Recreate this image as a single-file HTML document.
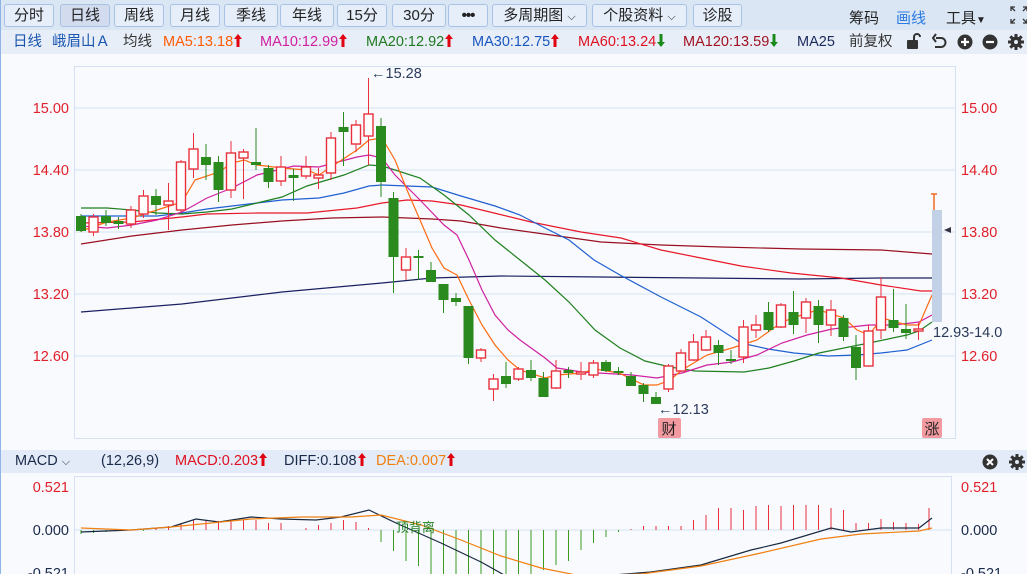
<!DOCTYPE html>
<html><head><meta charset="utf-8">
<style>
*{margin:0;padding:0;box-sizing:border-box}
body{width:1027px;height:574px;overflow:hidden;background:#f8fafe;font-family:"Liberation Sans","Noto Sans CJK SC",sans-serif;position:relative;border-left:1px solid #8fb4e8}
.tb{position:absolute;left:0;top:0;width:1027px;height:30px;background:#dbe6f5}
.btn{position:absolute;top:4px;height:23px;border:1px solid #a8c2e6;border-radius:3px;background:#e6eefa;font-size:15px;color:#222;text-align:center;line-height:21px}
.row2{position:absolute;left:0;top:30px;width:1027px;height:24px;background:#e8eef8;font-size:14.5px;line-height:24px;white-space:nowrap}
.row2 span{position:absolute;top:0}
.t{position:absolute;font-size:14.5px;white-space:nowrap}
.mh{position:absolute;left:0;top:450px;width:1027px;height:23px;background:#e2ebf7;font-size:14.5px;line-height:23px;white-space:nowrap}
.mh span{position:absolute;top:0}
svg.a{display:inline-block;vertical-align:-1px;margin-left:1px}
</style></head><body>
<div class="tb">
<div class="btn" style="left:3px;width:50px">分时</div>
<div class="btn" style="left:59px;width:50px;background:#d3dbef">日线</div>
<div class="btn" style="left:113px;width:50px">周线</div>
<div class="btn" style="left:169px;width:50px">月线</div>
<div class="btn" style="left:223px;width:54px">季线</div>
<div class="btn" style="left:279px;width:54px">年线</div>
<div class="btn" style="left:336px;width:50px">15分</div>
<div class="btn" style="left:391px;width:54px">30分</div>
<div class="btn" style="left:447px;width:40px;font-weight:bold;letter-spacing:-1px">•••</div>
<div class="btn" style="left:491px;width:95px">多周期图 <span style="font-size:11px">⌵</span></div>
<div class="btn" style="left:591px;width:95px">个股资料 <span style="font-size:11px">⌵</span></div>
<div class="btn" style="left:692px;width:49px">诊股</div>
<div class="t" style="left:848px;top:7px;font-size:15px;color:#222">筹码</div>
<div class="t" style="left:895px;top:7px;font-size:15px;color:#2b7be0">画线</div>
<div class="t" style="left:945px;top:7px;font-size:15px;color:#222">工具<span style="font-size:10px">▼</span></div>
<svg style="position:absolute;left:1009px;top:6px" width="18" height="18" viewBox="0 0 18 18" fill="none" stroke="#333" stroke-width="1.3"><path d="M1 5V1h4M1 1l4 4M13 1h4v4M17 1l-4 4M1 13v4h4M1 17l4-4M17 13v4h-4M17 17l-4-4"/></svg>
</div>
<div class="row2">
<span style="left:12px;color:#1a56b0">日线</span>
<span style="left:51px;color:#1a56b0">峨眉山Ａ</span>
<span style="left:122px;color:#333">均线</span>
<span style="left:162px;color:#ff5a00">MA5:13.18<svg class="a" width="8" height="13" viewBox="0 0 8 13"><path d="M4 0L8 5H5.5V13H2.5V5H0Z" fill="#e00010"/></svg></span>
<span style="left:259px;color:#d020a0">MA10:12.99<svg class="a" width="8" height="13" viewBox="0 0 8 13"><path d="M4 0L8 5H5.5V13H2.5V5H0Z" fill="#e00010"/></svg></span>
<span style="left:365px;color:#1f7a1f">MA20:12.92<svg class="a" width="8" height="13" viewBox="0 0 8 13"><path d="M4 0L8 5H5.5V13H2.5V5H0Z" fill="#e00010"/></svg></span>
<span style="left:471px;color:#1a56c0">MA30:12.75<svg class="a" width="8" height="13" viewBox="0 0 8 13"><path d="M4 0L8 5H5.5V13H2.5V5H0Z" fill="#e00010"/></svg></span>
<span style="left:577px;color:#e01020">MA60:13.24<svg class="a" width="8" height="13" viewBox="0 0 8 13"><path d="M4 13L8 8H5.5V0H2.5V8H0Z" fill="#1a8a1a"/></svg></span>
<span style="left:682px;color:#a01020">MA120:13.59<svg class="a" width="8" height="13" viewBox="0 0 8 13"><path d="M4 13L8 8H5.5V0H2.5V8H0Z" fill="#1a8a1a"/></svg></span>
<span style="left:796px;color:#1a2a5a">MA25</span>
<span style="left:848px;color:#333">前复权</span>
</div>
<svg style="position:absolute;left:904px;top:32px" width="123" height="20" viewBox="0 0 123 20">
<rect x="2" y="8" width="11" height="9" rx="1" fill="#333"/><path d="M9 8V5a3 3 0 0 1 6 0" stroke="#333" stroke-width="2" fill="none"/>
<path d="M31 6h5a4.5 4.5 0 0 1 0 9h-6M31 2l-3 4 3 4" stroke="#333" stroke-width="2" fill="none"/>
<circle cx="60" cy="10" r="7.5" fill="#333"/><path d="M56 10h8M60 6v8" stroke="#fff" stroke-width="2.2"/>
<circle cx="85" cy="10" r="7.5" fill="#333"/><path d="M81 10h8" stroke="#fff" stroke-width="2.2"/>
<g transform="translate(111,10)"><circle r="5.5" fill="#333"/><g stroke="#333" stroke-width="3"><path d="M0 -8V8M-8 0H8M-5.7 -5.7L5.7 5.7M5.7 -5.7L-5.7 5.7"/></g><circle r="2" fill="#e8eef8"/></g>
</svg>

<svg id="ch" style="position:absolute;left:0;top:54px" width="1027" height="520" viewBox="0 54 1027 520"></svg>

<div class="mh">
<span style="left:14px;color:#1a2a4a">MACD <span style="font-size:11px;position:static">⌵</span></span>
<span style="left:100px;color:#1a2a4a">(12,26,9)</span>
<span style="left:174px;color:#e01020">MACD:0.203<svg class="a" width="8" height="13" viewBox="0 0 8 13"><path d="M4 0L8 5H5.5V13H2.5V5H0Z" fill="#e00010"/></svg></span>
<span style="left:283px;color:#1a2a4a">DIFF:0.108<svg class="a" width="8" height="13" viewBox="0 0 8 13"><path d="M4 0L8 5H5.5V13H2.5V5H0Z" fill="#e00010"/></svg></span>
<span style="left:375px;color:#f08010">DEA:0.007<svg class="a" width="8" height="13" viewBox="0 0 8 13"><path d="M4 0L8 5H5.5V13H2.5V5H0Z" fill="#e00010"/></svg></span>
</div>
<svg style="position:absolute;left:979px;top:452px" width="48" height="20" viewBox="0 0 48 20">
<circle cx="10" cy="10" r="7.5" fill="#333"/><path d="M7 7l6 6M13 7l-6 6" stroke="#fff" stroke-width="2"/>
<g transform="translate(37,10)"><circle r="5.5" fill="#333"/><g stroke="#333" stroke-width="3"><path d="M0 -8V8M-8 0H8M-5.7 -5.7L5.7 5.7M5.7 -5.7L-5.7 5.7"/></g><circle r="2" fill="#e2ebf7"/></g>
</svg>

<script>
var s='';
function L(x1,y1,x2,y2,c,w){s+='<line x1="'+x1+'" y1="'+y1+'" x2="'+x2+'" y2="'+y2+'" stroke="'+c+'" stroke-width="'+(w||1)+'"/>';}
function T(x,y,t,c,a,sz){s+='<text x="'+x+'" y="'+y+'" fill="'+c+'" font-size="'+(sz||14.5)+'" text-anchor="'+(a||'start')+'" font-family="Liberation Sans,Noto Sans CJK SC,sans-serif">'+t+'</text>';}
s+='<rect x="73.5" y="66.5" width="881" height="372" fill="#f8fafe" stroke="#d3e1f3"/>';
[108,170,232,294,356].forEach(function(y,i){L(74,y,954,y,'#d3e1f3');var v=['15.00','14.40','13.80','13.20','12.60'][i];T(68,y+5,v,'#e0202a','end');T(960,y+5,v,'#e0202a');});
function P(pts,c){s+='<polyline fill="none" stroke="'+c+'" stroke-width="1.2" points="'+pts+'"/>';}
P('80,312 181,304 281,292 381,283 431,278 500,276 600,277 700,278 800,279 880,278 931,278','#1a2060');
P('80,244 131,236 181,230 231,225 281,221 331,218 381,217 431,219 460,221 500,228 550,235 600,242 660,245 720,247 800,249 880,250 931,254','#9a1020');
P('80,223 131,222 181,217 206,214 256,213 306,213 356,208 381,203 406,200 431,201 460,205 493,213 530,222 580,232 620,238 660,250 700,258 740,266 790,273 840,278 880,285 920,291 931,291','#e81828');
P('80,216 131,216 156,216 181,213 206,209 231,206 256,203 281,200 318,198 343,193 368,186 381,185 431,187 460,196 494,206 519,215 544,228 568,240 593,260 619,275 660,297 700,317 740,343 767,349 793,353 827,356 856,355 880,353 906,350 931,340','#2060d0');
P('80,208 106,208 131,210 156,213 181,214 206,212 231,209 256,203 281,197 306,186 343,175 368,165 381,166 394,170 419,178 443,195 468,215 494,240 519,260 544,280 568,302 594,330 619,348 644,361 669,367 694,371 743,372 768,368 793,361 818,353 843,348 868,343 906,335 918,331 931,322','#208020');
P('80,226 106,228 131,225 156,220 181,212 206,198 231,188 256,175 293,166 318,167 356,157 368,155 381,158 394,175 419,200 443,225 456,235 468,260 481,290 494,315 507,330 519,340 544,358 556,368 581,372 631,375 656,378 681,373 706,365 731,362 756,355 781,343 806,335 831,329 868,325 893,325 918,322 931,315','#d020a0');
P('80,231 106,222 131,218 156,210 181,202 194,180 218,172 231,163 243,160 256,165 281,168 306,170 318,175 330,167 356,150 368,140 381,138 394,160 406,190 419,220 431,248 443,268 456,275 468,300 481,325 494,345 507,360 519,370 544,378 556,375 581,373 594,369 618,373 643,385 656,385 669,380 681,370 706,355 731,348 756,340 781,322 806,313 818,310 843,318 856,330 868,335 881,318 906,325 918,325 931,295','#ff6a10');
var C=[[0,216,231,214,232],[1,217,232,214,236],[0,216,223,210,226],[0,221,224,217,229],[1,210,224,206,228],[1,196,214,190,218],[0,196,205,189,215],[1,201,205,183,230],[1,162,210,160,212],[1,149,169,133,178],[0,157,165,144,180],[0,162,190,156,202],[1,153,190,141,198],[1,152,158,149,199],[0,162,165,128,170],[0,168,182,165,188],[1,167,181,156,186],[0,175,178,169,201],[1,167,176,156,179],[1,175,178,168,189],[1,138,173,132,180],[0,127,132,112,166],[1,125,144,120,152],[1,114,136,78,165],[0,126,182,118,197],[0,198,257,192,293],[1,257,270,248,280],[0,256,258,250,280],[0,270,282,262,282],[0,284,300,284,313],[0,298,302,293,306],[0,306,358,306,364],[1,350,358,348,362],[1,379,389,374,401],[0,376,384,362,388],[1,369,379,367,381],[0,370,378,360,381],[0,378,397,372,397],[1,371,388,360,389],[0,370,373,367,378],[1,372,374,362,380],[1,363,375,360,378],[0,362,371,360,372],[0,371,373,367,375],[0,376,386,372,386],[0,385,394,383,402],[0,397,404,392,404],[1,366,389,364,392],[1,353,371,349,372],[1,342,360,334,361],[1,337,350,330,351],[0,345,353,340,365],[0,359,361,350,364],[1,327,357,320,363],[1,325,330,315,338],[0,312,330,302,332],[1,305,327,303,328],[0,312,325,291,334],[1,302,318,298,333],[0,306,325,300,343],[1,310,325,300,336],[0,318,337,315,341],[0,347,368,335,380],[1,331,366,325,366],[1,297,330,277,339],[0,320,328,289,332],[0,329,333,304,339],[1,329,331,323,340]];
C.forEach(function(c,i){var x=80+i*12.5;var col=c[0]?'#e8303c':'#2a8a1e';
L(x,c[3],x,c[1],col);L(x,c[2],x,c[4],col);
if(c[0])s+='<rect x="'+(x-4.5)+'" y="'+c[1]+'" width="9" height="'+Math.max(1,c[2]-c[1])+'" fill="#fff" stroke="'+col+'" stroke-width="1.4"/>';
else s+='<rect x="'+(x-5)+'" y="'+c[1]+'" width="10" height="'+Math.max(2,c[2]-c[1])+'" fill="'+col+'"/>';});
s+='<rect x="931" y="210" width="10" height="112" fill="#c3d1e6"/>';
L(930,194,936,194,'#f06a20',1.5);L(933,194,933,210,'#f06a20',1.5);
s+='<path d="M943 230l7 -3v6z" fill="#334"/>';
T(932,337,'12.93-14.0','#2a3a5a');
T(370,78,'←15.28','#2a3a5a');T(657,414,'←12.13','#2a3a5a');
s+='<rect x="657" y="418" width="23" height="20" rx="2" fill="#f29aa0"/><rect x="921" y="418" width="20" height="20" rx="2" fill="#f29aa0"/>';
T(668,434,'财','#222','middle',15);T(931,434,'涨','#222','middle',15);
s+='<rect x="73.5" y="476.5" width="877" height="100" fill="#f8fafe" stroke="#d3e1f3"/>';
L(74,530,950,530,'#d3e1f3');
T(68,492,'0.521','#e0202a','end');T(68,535,'0.000','#1a2a4a','end');T(68,578,'-0.521','#1a2a4a','end');
T(960,492,'0.521','#e0202a');T(960,535,'0.000','#1a2a4a');T(960,578,'-0.521','#1a2a4a');
var H=[-4,-3,-2,-1,0,-1,1,2,4,7,10,10,9,10,10,10,7,7,3,0,2,5,7,10,8,2,-12,-21,-31,-36,-41,-46,-50,-52,-54,-55,-54,-52,-48,-44,-40,-35,-31,-27,-20,-13,-7,-2,1,4,4,4,4,10,15,22,22,22,20,24,25,24,25,25,25,22,20,15,7,7,11,8,7,6,22];
for(var i=0;i<68;i++){var h=H[Math.round(i*(H.length-2)/67)];var x=80+i*12.5;if(h===0)continue;L(x,530,x,530-h,h>0?'#e8303c':'#3a9a20');}
L(928,530,928,508,'#e8303c');
P('80,532 130,530 170,527 195,519 218,522 250,517 280,519 315,520 340,517 368,510 395,523 440,543 480,562 505,576 560,580 600,576 650,572 700,565 750,550 780,543 830,528 850,532 880,528 918,528 931,518','#1a2a40');
P('80,528 130,530 170,527 200,524 250,519 300,517 350,517 380,515 420,525 460,540 500,556 540,568 580,576 640,574 700,566 760,553 820,539 860,534 918,531 931,528','#f08010');
T(395,532,'顶背离','#208020','start',13);
document.getElementById('ch').innerHTML=s;
</script>
</body></html>
